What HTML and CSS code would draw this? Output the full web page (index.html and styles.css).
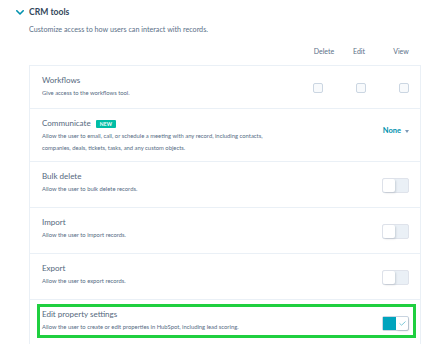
FILE: index.html
```html
<!DOCTYPE html>
<html>
<head>
<meta charset="utf-8">
<link rel="stylesheet" href="styles.css">
</head>
<body>
<div class="page">
  <div class="section-head">
    <svg class="chevron" width="8" height="5" viewBox="0 0 8 5"><polyline points="0.8,0.8 4,4 7.2,0.8" fill="none" stroke="#0091ae" stroke-width="1.6" stroke-linecap="round" stroke-linejoin="round"/></svg>
    <span class="section-title">CRM tools</span>
  </div>
  <div class="body">
    <p class="intro">Customize access to how users can interact with records.</p>
    <div class="cols">
      <span class="col col-delete">Delete</span>
      <span class="col col-edit">Edit</span>
      <span class="col col-view">View</span>
    </div>
    <div class="card">
      <div class="row row-first">
        <div class="text">
          <div class="title">Workflows</div>
          <div class="desc">Give access to the workflows tool.</div>
        </div>
        <div class="checks">
          <span class="check"></span>
          <span class="check"></span>
          <span class="check"></span>
        </div>
      </div>
      <div class="row row-comm">
        <div class="text">
          <div class="title">Communicate <span class="badge">NEW</span></div>
          <div class="desc">Allow the user to email, call, or schedule a meeting with any record, including contacts,<br>companies, deals, tickets, tasks, and any custom objects.</div>
        </div>
        <div class="dropdown">None <span class="caret"></span></div>
      </div>
      <div class="row">
        <div class="text">
          <div class="title">Bulk delete</div>
          <div class="desc">Allow the user to bulk delete records.</div>
        </div>
        <span class="toggle"><span class="knob"></span><span class="track"></span></span>
      </div>
      <div class="row">
        <div class="text">
          <div class="title">Import</div>
          <div class="desc">Allow the user to import records.</div>
        </div>
        <span class="toggle"><span class="knob"></span><span class="track"></span></span>
      </div>
      <div class="row">
        <div class="text">
          <div class="title">Export</div>
          <div class="desc">Allow the user to export records.</div>
        </div>
        <span class="toggle"><span class="knob"></span><span class="track"></span></span>
      </div>
      <div class="row row-last">
        <div class="highlight">
          <div class="text">
            <div class="title">Edit property settings</div>
            <div class="desc">Allow the user to create or edit properties in HubSpot, including lead scoring.</div>
          </div>
          <span class="toggle toggle-on"><span class="track-on"></span><span class="knob knob-on"><svg width="7" height="5" viewBox="0 0 7 5"><polyline points="0.8,2.6 2.6,4.2 6.2,0.8" fill="none" stroke="#7fc9d8" stroke-width="1" stroke-linecap="round" stroke-linejoin="round"/></svg></span></span>
        </div>
      </div>
    </div>
  </div>
</div>
</body>
</html>
```
FILE: styles.css
```css
html, body {
  margin: 0;
  padding: 0;
  background: #ffffff;
}
body {
  font-family: Lato, "Open Sans", sans-serif;
  color: #33475b;
}
.page {
  padding: 5px 6px 0 16px;
}
.section-head {
  display: flex;
  align-items: center;
  height: 14px;
}
.chevron {
  margin-right: 5px;
  display: block;
}
.section-title {
  font-size: 8.6px;
  font-weight: 700;
  line-height: 14px;
  color: #33475b;
}
.body {
  padding-left: 13px;
}
.intro {
  margin: 5px 0 0;
  font-size: 7.2px;
  line-height: 12px;
  color: #5b7088;
}
.cols {
  display: flex;
  justify-content: flex-end;
  margin-top: 10px;
  padding-right: 10px;
  font-size: 7px;
  line-height: 10px;
  color: #5b7088;
}
.col {
  text-align: center;
}
.col-delete { width: 30px; }
.col-edit { width: 20px; margin-left: 10px; }
.col-view { width: 20px; margin-left: 22px; }
.card {
  margin-top: 9px;
  border: 1px solid #eaf0f6;
  border-bottom: none;
}
.row {
  display: flex;
  align-items: flex-start;
  padding: 8px 11px 12px 12px;
  border-top: 1px solid #eaf0f6;
}
.row-first {
  border-top: none;
  padding-bottom: 9px;
}
.row-comm {
  padding-bottom: 7px;
}
.text {
  flex: 1;
}
.title {
  font-size: 8px;
  line-height: 13px;
  color: #54687d;
  display: flex;
  align-items: center;
}
.desc {
  font-size: 5.85px;
  line-height: 12px;
  color: #566c84;
}
.badge {
  display: inline-block;
  margin-left: 5px;
  background: #00bda5;
  color: #ffffff;
  font-size: 5px;
  font-weight: 700;
  line-height: 8px;
  padding: 0 4px;
  border-radius: 1px;
  letter-spacing: 0.2px;
}
.checks {
  display: flex;
  gap: 33px;
  margin-top: 9px;
}
.check {
  width: 8px;
  height: 8px;
  border: 1px solid #cbd6e2;
  border-radius: 2px;
  background: #f8fafc;
  display: block;
}
.dropdown {
  margin-top: 8px;
  font-size: 7.5px;
  font-weight: 700;
  line-height: 12px;
  color: #0091ae;
  display: flex;
  align-items: center;
}
.caret {
  margin-left: 4px;
  width: 0;
  height: 0;
  border-left: 2.5px solid transparent;
  border-right: 2.5px solid transparent;
  border-top: 3px solid #7c98b6;
  display: inline-block;
}
.toggle {
  margin-top: 8px;
  width: 27px;
  height: 15px;
  box-sizing: border-box;
  border: 1px solid #dfe3eb;
  border-radius: 2px;
  display: flex;
  background: #eaf0f6;
}
.knob {
  width: 12px;
  height: 13px;
  background: #ffffff;
  border-radius: 2px;
  box-shadow: 1px 1px 2px rgba(45, 62, 80, 0.18);
  display: flex;
  align-items: center;
  justify-content: center;
}
.track {
  flex: 1;
}
.row-last {
  padding: 4px 4px 6px 7px;
}
.highlight {
  flex: 1;
  display: flex;
  align-items: flex-start;
  border: 3px solid #1fcf3f;
  padding: 1px 4px 2px 2px;
}
.toggle-on {
  margin-top: 8px;
  border-color: #cbd6e2;
  background: #ffffff;
}
.track-on {
  width: 13px;
  background: #00a4bd;
}
.knob-on {
  flex: 1;
}
```
